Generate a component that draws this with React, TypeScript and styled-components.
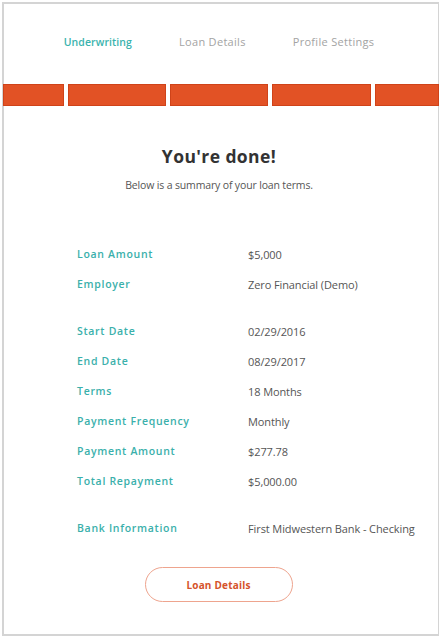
import React from "react";
import styled, { createGlobalStyle } from "styled-components";

const Global = createGlobalStyle`
  html, body { margin: 0; padding: 0; background: #ffffff; }
  body { font-family: "Open Sans", "Lato", sans-serif; }
`;

const Frame = styled.div`
  box-sizing: border-box;
  margin: 2px;
  width: 437px;
  height: 634px;
  border: 2px solid #d4d4d4;
  border-right-width: 1.5px;
  display: flex;
  flex-direction: column;
  background: #fff;
`;

const Nav = styled.nav`
  height: 80px;
  box-sizing: border-box;
  padding-top: 30px;
  display: flex;
  justify-content: center;
  gap: 47px;
  padding-right: 4px;
`;

const Tab = styled.span<{ $active?: boolean }>`
  font-size: ${(p) => (p.$active ? "10.5px" : "11px")};
  line-height: 16px;
  font-weight: ${(p) => (p.$active ? 600 : 400)};
  color: ${(p) => (p.$active ? "#3ab3ae" : "#a3a3a3")};
  letter-spacing: ${(p) => (p.$active ? "0.1px" : "0.3px")};
`;

const Progress = styled.div`
  height: 22px;
  display: flex;
  gap: 4px;
  margin-left: -1px;
`;

const Segment = styled.div<{ $w: number }>`
  flex: 0 0 ${(p) => p.$w}px;
  box-sizing: border-box;
  background: #e25225;
  border: 1px solid #cf4319;
`;

const Title = styled.h1`
  margin: 40px 0 0;
  padding-right: 4px;
  text-align: center;
  font-size: 17.5px;
  line-height: 20px;
  font-weight: 700;
  color: #333333;
  letter-spacing: 0.4px;
`;

const Subtitle = styled.p`
  margin: 12px 0 0;
  padding-right: 4px;
  text-align: center;
  font-size: 10.5px;
  line-height: 14px;
  color: #555555;
  letter-spacing: -0.15px;
`;

const Summary = styled.div`
  margin-top: 47px;
  padding-left: 73px;
  display: flex;
  flex-direction: column;
  gap: 17px;
`;

const Group = styled.div`
  display: grid;
  grid-template-columns: 171px 1fr;
  grid-auto-rows: 30px;
  align-items: center;
`;

const Label = styled.span`
  font-size: 10.5px;
  font-weight: 600;
  color: #3ab0ab;
  letter-spacing: 0.7px;
`;

const Value = styled.span`
  font-size: 11px;
  color: #555555;
  letter-spacing: -0.1px;
`;

const ButtonRow = styled.div`
  margin-top: 24px;
  display: flex;
  justify-content: center;
  padding-right: 5px;
`;

const Button = styled.button`
  width: 148px;
  height: 35px;
  box-sizing: border-box;
  border-radius: 18px;
  border: 1.5px solid #eea48e;
  background: #ffffff;
  color: #d5532b;
  font-family: "Open Sans", "Lato", sans-serif;
  font-size: 10px;
  font-weight: 700;
  letter-spacing: 0.2px;
`;

const groups: [string, string][][] = [
  [
    ["Loan Amount", "$5,000"],
    ["Employer", "Zero Financial (Demo)"],
  ],
  [
    ["Start Date", "02/29/2016"],
    ["End Date", "08/29/2017"],
    ["Terms", "18 Months"],
    ["Payment Frequency", "Monthly"],
    ["Payment Amount", "$277.78"],
    ["Total Repayment", "$5,000.00"],
  ],
  [["Bank Information", "First Midwestern Bank - Checking"]],
];

export default function App() {
  return (
    <>
      <Global />
      <Frame>
        <Nav>
          <Tab $active>Underwriting</Tab>
          <Tab>Loan Details</Tab>
          <Tab>Profile Settings</Tab>
        </Nav>
        <Progress>
          {[61, 98, 98, 99, 64].map((w, i) => (
            <Segment key={i} $w={w} />
          ))}
        </Progress>
        <Title>You're done!</Title>
        <Subtitle>Below is a summary of your loan terms.</Subtitle>
        <Summary>
          {groups.map((g, gi) => (
            <Group key={gi}>
              {g.map(([l, v]) => (
                <React.Fragment key={l}>
                  <Label>{l}</Label>
                  <Value>{v}</Value>
                </React.Fragment>
              ))}
            </Group>
          ))}
        </Summary>
        <ButtonRow>
          <Button>Loan Details</Button>
        </ButtonRow>
      </Frame>
    </>
  );
}
